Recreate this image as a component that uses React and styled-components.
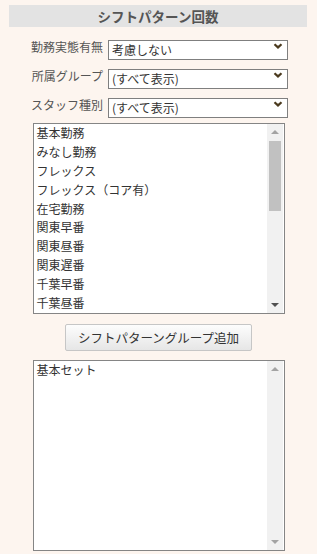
import React from "react";
import styled, { createGlobalStyle } from "styled-components";

const GlobalStyle = createGlobalStyle`
  html, body {
    margin: 0;
    padding: 0;
    background: #fdf5ef;
  }
  body {
    font-family: "Noto Sans CJK JP", "Noto Sans", sans-serif;
    color: #333;
  }
`;

const Page = styled.div`
  width: 317px;
  height: 554px;
  padding-top: 5px;
  box-sizing: border-box;
  display: flex;
  flex-direction: column;
  align-items: center;
`;

const Title = styled.div`
  width: 298px;
  height: 22px;
  margin-left: -1px;
  background: #e3e3e3;
  color: #555;
  font-size: 13.5px;
  font-weight: bold;
  line-height: 22px;
  text-align: center;
`;

const Filters = styled.div`
  display: flex;
  flex-direction: column;
  gap: 9px;
  margin-top: 9px;
`;

const Row = styled.div`
  display: flex;
  align-items: center;
  justify-content: flex-end;
  gap: 5px;
  height: 20px;
  margin-left: ${(p) => p.$shift || 0}px;
`;

const Label = styled.span`
  font-size: 12px;
  line-height: 20px;
  padding-top: 1px;
  color: #555;
  white-space: nowrap;
`;

const SelectWrap = styled.div`
  position: relative;
  width: 180px;
  height: 20px;
`;

const Select = styled.select`
  appearance: none;
  width: 100%;
  height: 100%;
  box-sizing: border-box;
  border: 1px solid #7f7f7f;
  border-radius: 0;
  background: #fff;
  padding: 0 20px 1px 3px;
  font-family: inherit;
  font-size: 12px;
  color: #333;
  outline: none;
`;

const Chevron = styled.svg`
  position: absolute;
  right: 5px;
  top: 7px;
  pointer-events: none;
`;

const ListBox = styled.div`
  width: 252px;
  height: 191px;
  box-sizing: border-box;
  border: 1px solid #858585;
  background: #fff;
  display: flex;
  margin-top: ${(p) => p.$top}px;
`;

const Items = styled.ul`
  flex: 1;
  margin: 0;
  padding: 0 0 0 3px;
  list-style: none;
  overflow: hidden;
`;

const Item = styled.li`
  font-size: 12px;
  line-height: 18.9px;
  height: 18.9px;
  color: #333;
  white-space: nowrap;
`;

const Scrollbar = styled.div`
  width: 16px;
  margin-right: 1px;
  background: #f1f1f1;
  display: flex;
  flex-direction: column;
`;

const Arrow = styled.div`
  height: 16px;
  display: flex;
  align-items: center;
  justify-content: center;

  &::after {
    content: "";
    width: 0;
    height: 0;
    border-left: 4px solid transparent;
    border-right: 4px solid transparent;
    ${(p) =>
      p.$down
        ? `border-top: 4px solid ${p.$dark ? "#505050" : "#a3a3a3"};`
        : `border-bottom: 4px solid ${p.$dark ? "#505050" : "#a3a3a3"};`}
  }
`;

const Thumb = styled.div`
  height: ${(p) => p.$size}px;
  margin: 1px 2px 0;
  background: #c1c1c1;
`;

const Track = styled.div`
  flex: 1;
`;

const AddButton = styled.button`
  width: 187px;
  height: 27px;
  margin-top: 10px;
  border: 1px solid #c6c6c6;
  border-radius: 2px;
  background: linear-gradient(#fdfdfd, #e6e6e6);
  font-family: inherit;
  font-size: 12.5px;
  color: #333;
  cursor: pointer;
`;

const patterns = [
  "基本勤務",
  "みなし勤務",
  "フレックス",
  "フレックス（コア有）",
  "在宅勤務",
  "関東早番",
  "関東昼番",
  "関東遅番",
  "千葉早番",
  "千葉昼番",
];

const filters = [
  { label: "勤務実態有無", value: "考慮しない", shift: 2 },
  { label: "所属グループ", value: "(すべて表示)", shift: 0 },
  { label: "スタッフ種別", value: "(すべて表示)", shift: 0 },
];

const Dropdown = ({ value }) => (
  <SelectWrap>
    <Select defaultValue={value}>
      <option>{value}</option>
    </Select>
    <Chevron width="10" height="6" viewBox="0 0 10 6">
      <path d="M1.5 1.2 L5 4.4 L8.5 1.2" fill="none" stroke="#4b3a1e" strokeWidth="2.2" />
    </Chevron>
  </SelectWrap>
);

const List = ({ items, top, thumb }) => (
  <ListBox $top={top}>
    <Items>
      {items.map((t) => (
        <Item key={t}>{t}</Item>
      ))}
    </Items>
    <Scrollbar>
      <Arrow />
      {thumb ? <Thumb $size={thumb} /> : null}
      <Track />
      <Arrow $down $dark={!!thumb} />
    </Scrollbar>
  </ListBox>
);

const App = () => (
  <>
    <GlobalStyle />
    <Page>
      <Title>シフトパターン回数</Title>
      <Filters>
        {filters.map((f) => (
          <Row key={f.label} $shift={f.shift}>
            <Label>{f.label}</Label>
            <Dropdown value={f.value} />
          </Row>
        ))}
      </Filters>
      <List items={patterns} top={9} thumb={70} />
      <AddButton>シフトパターングループ追加</AddButton>
      <List items={["基本セット"]} top={9} />
    </Page>
  </>
);

export default App;
